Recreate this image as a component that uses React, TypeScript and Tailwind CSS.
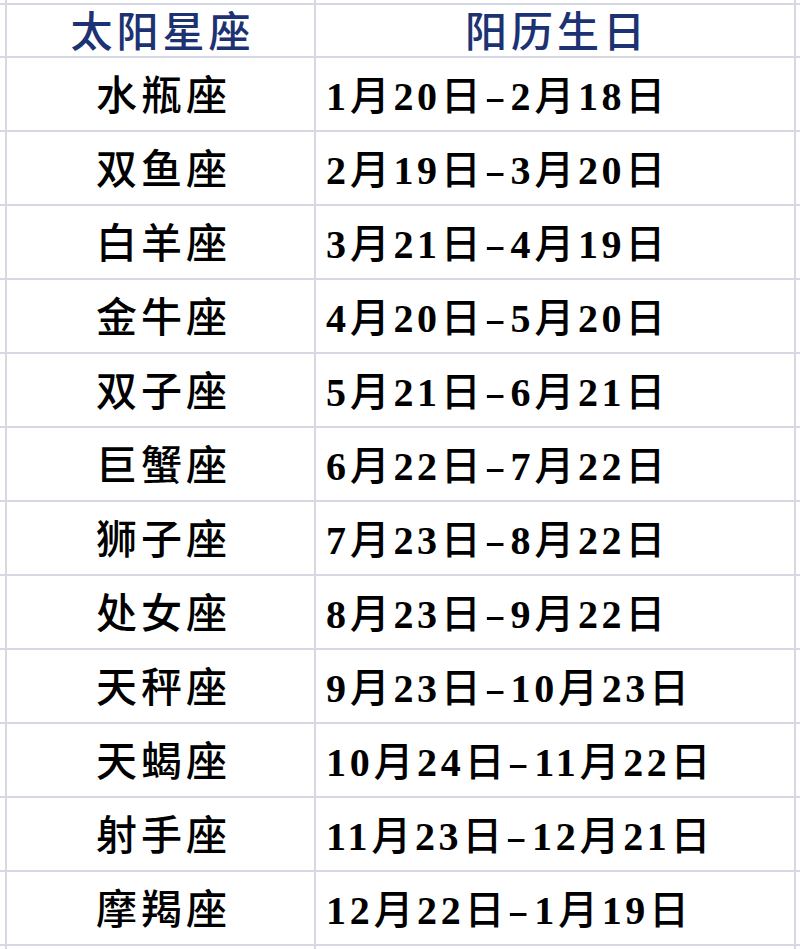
import React from 'react';

const rows = [
  ['水瓶座', '1月20日', '2月18日'],
  ['双鱼座', '2月19日', '3月20日'],
  ['白羊座', '3月21日', '4月19日'],
  ['金牛座', '4月20日', '5月20日'],
  ['双子座', '5月21日', '6月21日'],
  ['巨蟹座', '6月22日', '7月22日'],
  ['狮子座', '7月23日', '8月22日'],
  ['处女座', '8月23日', '9月22日'],
  ['天秤座', '9月23日', '10月23日'],
  ['天蝎座', '10月24日', '11月22日'],
  ['射手座', '11月23日', '12月21日'],
  ['摩羯座', '12月22日', '1月19日'],
];

const font = { fontFamily: '"Liberation Serif", "Noto Sans CJK SC", serif' };

// bordered grid cell, like a spreadsheet
const cell = 'border-r-2 border-b-2 border-[#d6d8e4]';

// digits in bold serif, CJK in medium
function DateText({ text }: { text: string }) {
  return (
    <>
      {text.split(/(\d+)/).filter(Boolean).map((part, i) =>
        /\d/.test(part) ? (
          <span key={i} className="font-bold">{part}</span>
        ) : (
          <span key={i}>{part}</span>
        )
      )}
    </>
  );
}

export default function App() {
  return (
    <div className="w-[800px] h-[949px] overflow-hidden bg-white" style={font}>
      <table className="border-collapse table-fixed w-[800px]">
        <colgroup>
          <col className="w-[6px]" />
          <col className="w-[309px]" />
          <col className="w-[480px]" />
          <col className="w-[5px]" />
        </colgroup>
        <tbody>
          <tr className="h-[4px]">
            <td className={cell} />
            <td className={cell} />
            <td className={cell} />
            <td className="border-b-2 border-[#d6d8e4]" />
          </tr>
          <tr className="h-[53px]">
            <td className={cell} />
            <td className={`${cell} text-center align-bottom pb-[2px] pl-[4px] text-[42px] leading-none tracking-[4px] font-medium text-[#1c3272]`}>
              太阳星座
            </td>
            <td className={`${cell} text-center align-bottom pb-[2px] pl-[4px] text-[42px] leading-none tracking-[4px] font-medium text-[#1c3272]`}>
              阳历生日
            </td>
            <td className="border-b-2 border-[#d6d8e4]" />
          </tr>
          {rows.map(([name, from, to]) => (
            <tr key={name} className="h-[74px]">
              <td className={cell} />
              <td className={`${cell} text-center align-bottom pb-[13px] pl-[6px] text-[41px] leading-none tracking-[4px] font-medium text-black`}>
                {name}
              </td>
              <td className={`${cell} align-bottom pb-[13px] pl-[10px] text-[40px] leading-none tracking-[3.7px] font-medium text-black whitespace-nowrap`}>
                <DateText text={from} />
                <span className="inline-block w-[26px] text-center scale-x-[1.6]">-</span>
                <DateText text={to} />
              </td>
              <td className="border-b-2 border-[#d6d8e4]" />
            </tr>
          ))}
          <tr className="h-[10px]">
            <td className="border-r-2 border-[#d6d8e4]" />
            <td className="border-r-2 border-[#d6d8e4]" />
            <td className="border-r-2 border-[#d6d8e4]" />
            <td />
          </tr>
        </tbody>
      </table>
    </div>
  );
}
